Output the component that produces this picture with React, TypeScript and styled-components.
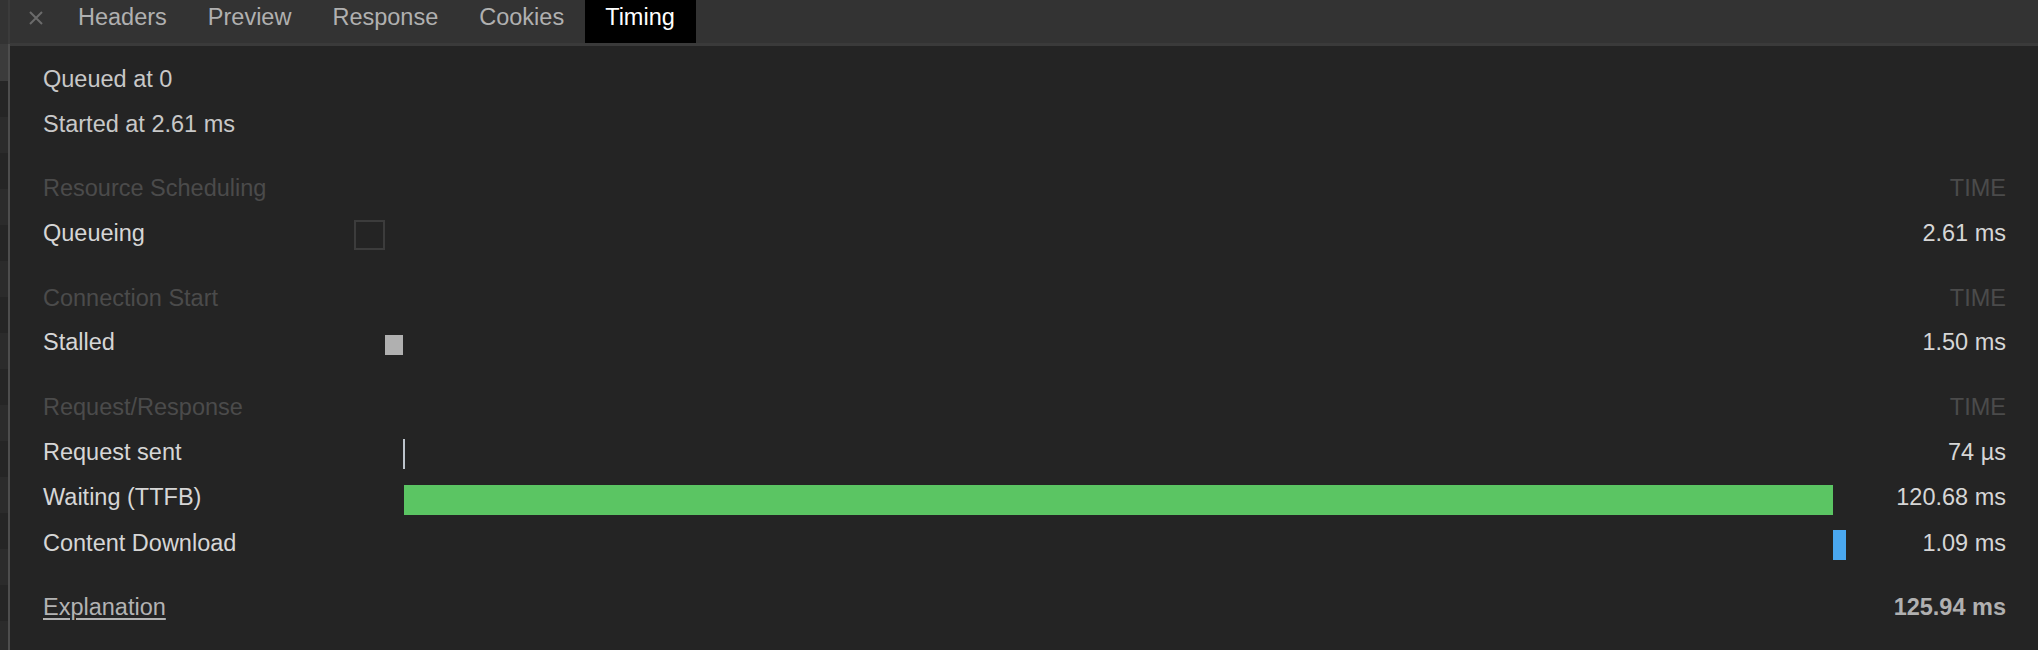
import styled, { createGlobalStyle } from 'styled-components';

const GlobalStyle = createGlobalStyle`
  html, body {
    margin: 0;
    padding: 0;
    background: #242424;
  }
  body {
    font-family: 'Liberation Sans', Arial, Helvetica, sans-serif;
    font-size: 23.5px;
    -webkit-font-smoothing: antialiased;
  }
`;

const TOTAL = 125.94;

const TABS = ['Headers', 'Preview', 'Response', 'Cookies', 'Timing'];
const ACTIVE_TAB = 'Timing';

type Phase = {
    label: string;
    start: number;
    duration: number;
    time: string;
    color: string;
    height?: number;
    outline?: boolean;
};

type Section = {
    title: string;
    phases: Phase[];
};

const SECTIONS: Section[] = [
    {
        title: 'Resource Scheduling',
        phases: [{ label: 'Queueing', start: 0, duration: 2.61, time: '2.61 ms', color: 'transparent', outline: true }],
    },
    {
        title: 'Connection Start',
        phases: [{ label: 'Stalled', start: 2.61, duration: 1.5, time: '1.50 ms', color: '#b0b0b0', height: 20 }],
    },
    {
        title: 'Request/Response',
        phases: [
            { label: 'Request sent', start: 4.11, duration: 0.074, time: '74 µs', color: '#bcc3cb' },
            { label: 'Waiting (TTFB)', start: 4.184, duration: 120.68, time: '120.68 ms', color: '#5bc563' },
            { label: 'Content Download', start: 124.864, duration: 1.09, time: '1.09 ms', color: '#4aa8f0' },
        ],
    },
];

// rows of the network list peeking out beside the drawer
const STRIPES = Array.from({ length: 16 }, (_, i) => i);

const App = () => {
    return (
        <>
            <GlobalStyle />
            <Page>
                <SidePane>
                    <SideHead />
                    <SideBody>
                        <Stripe $tone="selected" />
                        {STRIPES.map((i) => (
                            <Stripe key={i} $tone={i % 2 === 0 ? 'dark' : 'light'} />
                        ))}
                    </SideBody>
                </SidePane>
                <Main>
                    <TabBar>
                        <CloseBtn>
                            <svg width="14" height="14" viewBox="0 0 14 14">
                                <path d="M1 1 L13 13 M13 1 L1 13" stroke="#6b6b6b" strokeWidth="2" />
                            </svg>
                        </CloseBtn>
                        {TABS.map((tab) => (
                            <Tab key={tab} $active={tab === ACTIVE_TAB}>
                                {tab}
                            </Tab>
                        ))}
                    </TabBar>
                    <Content>
                        <Summary>Queued at 0</Summary>
                        <Summary>Started at 2.61 ms</Summary>
                        {SECTIONS.map((section) => (
                            <SectionBlock key={section.title}>
                                <Row $header>
                                    <span>{section.title}</span>
                                    <span />
                                    <Time>TIME</Time>
                                </Row>
                                {section.phases.map((p) => (
                                    <Row key={p.label}>
                                        <span>{p.label}</span>
                                        <Track>
                                            <Bar
                                                $color={p.color}
                                                $height={p.height ?? 30}
                                                $outline={!!p.outline}
                                                style={{
                                                    marginLeft: `${(p.start / TOTAL) * 100}%`,
                                                    width: `max(2px, ${(p.duration / TOTAL) * 100}%)`,
                                                }}
                                            />
                                        </Track>
                                        <Time>{p.time}</Time>
                                    </Row>
                                ))}
                            </SectionBlock>
                        ))}
                        <Footer>
                            <ExplainLink href="#">Explanation</ExplainLink>
                            <span />
                            <Total>125.94 ms</Total>
                        </Footer>
                    </Content>
                </Main>
            </Page>
        </>
    );
};

const Page = styled.div`
    display: flex;
    width: 2038px;
    height: 650px;
    overflow: hidden;
    background: #242424;
`;

const SidePane = styled.div`
    display: flex;
    flex-direction: column;
    width: 10px;
    flex: none;
`;

const SideHead = styled.div`
    height: 44px;
    background: #333333;
    border-right: 2px solid #3b3b3b;
    box-sizing: border-box;
`;

const SideBody = styled.div`
    flex: 1;
    display: flex;
    flex-direction: column;
    border-right: 2px solid #4d4d4d;
    overflow: hidden;
`;

const Stripe = styled.div<{ $tone: 'selected' | 'dark' | 'light' }>`
    flex: none;
    height: ${(p) => (p.$tone === 'selected' ? '37px' : '36px')};
    background: ${(p) => (p.$tone === 'selected' ? '#3b3b3b' : p.$tone === 'dark' ? '#252525' : '#2b2b2b')};
`;

const Main = styled.div`
    flex: 1;
    display: flex;
    flex-direction: column;
    min-width: 0;
`;

const TabBar = styled.div`
    display: flex;
    align-items: stretch;
    height: 43px;
    background: #333333;
    border-bottom: 3px solid #3a3a3a;
`;

const CloseBtn = styled.div`
    display: flex;
    align-items: center;
    justify-content: center;
    width: 48px;
    padding: 0 0 8px 4px;
    box-sizing: border-box;
`;

const Tab = styled.div<{ $active: boolean }>`
    padding: 4px 21px 0 20px;
    line-height: 27px;
    color: ${(p) => (p.$active ? '#ffffff' : '#b0b0b0')};
    background: ${(p) => (p.$active ? '#000000' : 'transparent')};
    white-space: nowrap;
`;

const Content = styled.div`
    display: flex;
    flex-direction: column;
    padding: 11px 32px 0 33px;
`;

const Summary = styled.div`
    height: 44.5px;
    line-height: 44.5px;
    color: #c8c8c8;
`;

const SectionBlock = styled.div`
    display: flex;
    flex-direction: column;
    margin-top: 20px;
`;

const Row = styled.div<{ $header?: boolean }>`
    display: grid;
    grid-template-columns: 311px 1fr 160px;
    align-items: center;
    height: ${(p) => (p.$header ? '44px' : '45.5px')};
    line-height: 30px;
    color: ${(p) => (p.$header ? '#4b4b4b' : '#d6d6d6')};
    white-space: nowrap;
`;

const Track = styled.div`
    display: flex;
    align-items: center;
    height: 100%;
    padding-top: 5px;
    box-sizing: border-box;
`;

const Bar = styled.div<{ $color: string; $height: number; $outline: boolean }>`
    flex: none;
    height: ${(p) => p.$height}px;
    background: ${(p) => p.$color};
    box-sizing: border-box;
    border: ${(p) => (p.$outline ? '2px solid #3c3c3c' : 'none')};
`;

const Time = styled.span`
    text-align: right;
`;

const Footer = styled.div`
    display: grid;
    grid-template-columns: 311px 1fr 160px;
    align-items: center;
    height: 44.5px;
    margin-top: 20px;
    white-space: nowrap;
`;

const ExplainLink = styled.a`
    justify-self: start;
    color: #b3b3b3;
    text-decoration: underline;
    text-underline-offset: 3px;
`;

const Total = styled.span`
    text-align: right;
    color: #b0b0b0;
    font-weight: bold;
`;

export default App;
